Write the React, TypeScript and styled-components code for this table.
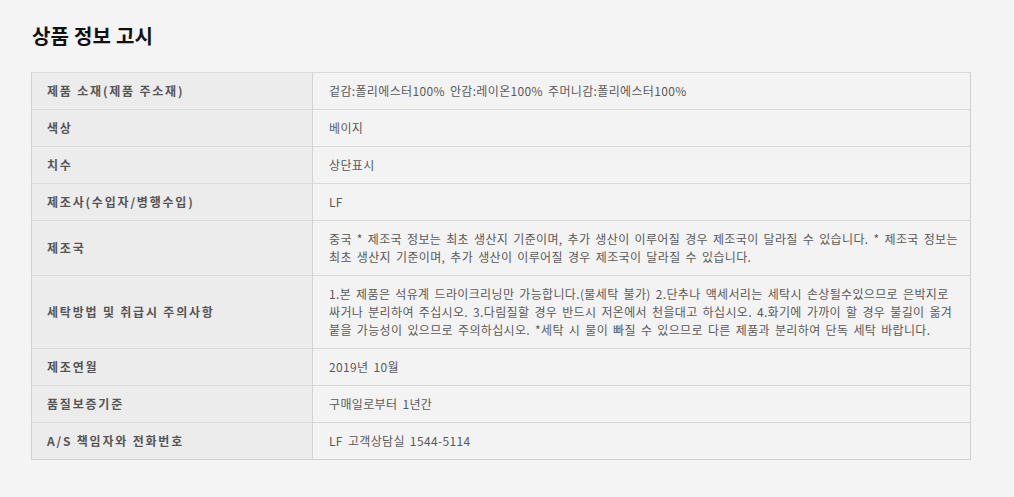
import React from "react";
import styled, { createGlobalStyle } from "styled-components";

const GlobalStyle = createGlobalStyle`
  html, body { margin: 0; padding: 0; background: #f4f4f4; }
  body { font-family: "Noto Sans CJK KR", "Noto Sans", sans-serif; }
`;

const Page = styled.div`
  padding: 22px 43px 37px 31px;
  width: 940px;
`;

const Title = styled.h2`
  margin: 0 0 0 1px;
  font-size: 20px;
  line-height: 28px;
  font-weight: 700;
  color: #111;
  letter-spacing: 0.2px;
`;

const Table = styled.table`
  margin-top: 22px;
  width: 940px;
  border-collapse: collapse;
  border: 1px solid #cfcfcf;
  table-layout: fixed;
`;

const Row = styled.tr`
  border-top: 1px solid #d9d9d9;
`;

const Label = styled.th`
  width: 281px;
  box-sizing: border-box;
  background: #ececec;
  border-right: 1px solid #d3d3d3;
  padding: 9px 15px;
  text-align: left;
  font-size: 12px;
  line-height: 18px;
  font-weight: 700;
  color: #555;
  letter-spacing: 1.8px;
  vertical-align: middle;
`;

const Value = styled.td`
  background: #f3f3f3;
  padding: 9px 2px 9px 16px;
  font-size: 12px;
  line-height: 18px;
  font-weight: 400;
  color: #5a5a5a;
  letter-spacing: 0.35px;
  word-spacing: 2px;
  word-break: keep-all;
  vertical-align: middle;
`;

const rows: [string, string][] = [
  ["제품 소재(제품 주소재)", "겉감:폴리에스터100% 안감:레이온100% 주머니감:폴리에스터100%"],
  ["색상", "베이지"],
  ["치수", "상단표시"],
  ["제조사(수입자/병행수입)", "LF"],
  [
    "제조국",
    "중국 * 제조국 정보는 최초 생산지 기준이며, 추가 생산이 이루어질 경우 제조국이 달라질 수 있습니다. * 제조국 정보는 최초 생산지 기준이며, 추가 생산이 이루어질 경우 제조국이 달라질 수 있습니다.",
  ],
  [
    "세탁방법 및 취급시 주의사항",
    "1.본 제품은 석유계 드라이크리닝만 가능합니다.(물세탁 불가) 2.단추나 액세서리는 세탁시 손상될수있으므로 은박지로 싸거나 분리하여 주십시오. 3.다림질할 경우 반드시 저온에서 천을대고 하십시오. 4.화기에 가까이 할 경우 불길이 옮겨 붙을 가능성이 있으므로 주의하십시오. *세탁 시 물이 빠질 수 있으므로 다른 제품과 분리하여 단독 세탁 바랍니다.",
  ],
  ["제조연월", "2019년 10월"],
  ["품질보증기준", "구매일로부터 1년간"],
  ["A/S 책임자와 전화번호", "LF 고객상담실 1544-5114"],
];

export default function App() {
  return (
    <Page>
      <GlobalStyle />
      <Title>상품 정보 고시</Title>
      <Table>
        <tbody>
          {rows.map(([k, v]) => (
            <Row key={k}>
              <Label>{k}</Label>
              <Value>{v}</Value>
            </Row>
          ))}
        </tbody>
      </Table>
    </Page>
  );
}
